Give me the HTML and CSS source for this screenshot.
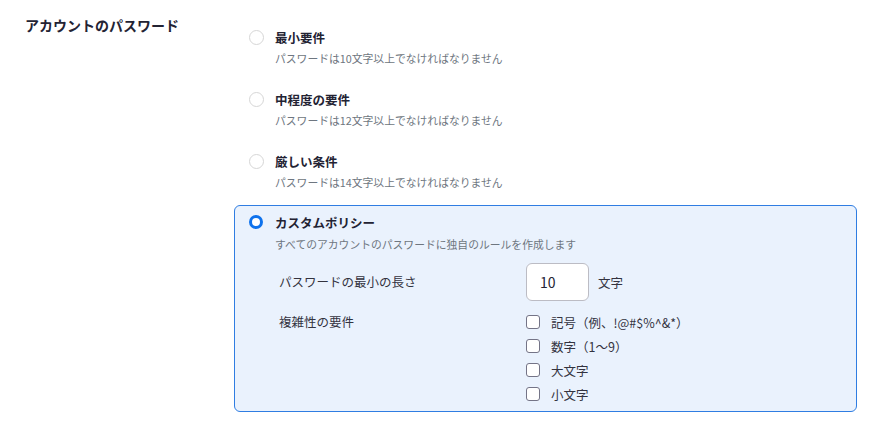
FILE: index.html
```html
<!DOCTYPE html>
<html lang="ja">
<head>
<meta charset="utf-8">
<link rel="stylesheet" href="styles.css">
</head>
<body>
<div class="setting">
  <div class="setting-title">アカウントのパスワード</div>
  <div class="options">
    <div class="option">
      <div class="option-head"><span class="radio"></span><span class="option-label">最小要件</span></div>
      <div class="option-desc">パスワードは10文字以上でなければなりません</div>
    </div>
    <div class="option">
      <div class="option-head"><span class="radio"></span><span class="option-label">中程度の要件</span></div>
      <div class="option-desc">パスワードは12文字以上でなければなりません</div>
    </div>
    <div class="option option-last">
      <div class="option-head"><span class="radio"></span><span class="option-label">厳しい条件</span></div>
      <div class="option-desc">パスワードは14文字以上でなければなりません</div>
    </div>
    <div class="custom">
      <div class="option-head"><span class="radio radio-checked"></span><span class="option-label">カスタムポリシー</span></div>
      <div class="option-desc">すべてのアカウントのパスワードに独自のルールを作成します</div>
      <div class="rules">
        <div class="rule-row rule-length">
          <div class="rule-label">パスワードの最小の長さ</div>
          <div class="rule-control">
            <div class="num-input">10</div>
            <span class="unit">文字</span>
          </div>
        </div>
        <div class="rule-row rule-complex">
          <div class="rule-label">複雑性の要件</div>
          <div class="checks">
            <div class="check-row"><span class="checkbox"></span><span>記号（例、!@#$%^&amp;*）</span></div>
            <div class="check-row"><span class="checkbox"></span><span>数字（1～9）</span></div>
            <div class="check-row"><span class="checkbox"></span><span>大文字</span></div>
            <div class="check-row"><span class="checkbox"></span><span>小文字</span></div>
          </div>
        </div>
      </div>
    </div>
  </div>
</div>
</body>
</html>
```

FILE: styles.css
```css
* { box-sizing: border-box; }
html, body { margin: 0; padding: 0; background: #ffffff; }
body {
  font-family: "Noto Sans CJK JP", "Noto Sans", "Liberation Sans", sans-serif;
  color: #232333;
}
.setting {
  display: flex;
  padding: 15px 0 0 25px;
}
.setting-title {
  width: 209px;
  flex: none;
  font-size: 14px;
  font-weight: 700;
  line-height: 20px;
  color: #232333;
}
.options {
  width: 623px;
  flex: none;
  padding-top: 12px;
}
.option {
  padding-left: 15px;
  margin-bottom: 23px;
}
.option-last { margin-bottom: 15px; }
.option-head {
  display: flex;
  align-items: center;
  height: 20px;
}
.radio {
  width: 15px;
  height: 15px;
  border-radius: 50%;
  border: 1px solid #d6d6d6;
  background: #fff;
  flex: none;
  margin-right: 11px;
}
.radio-checked {
  width: 14px;
  height: 14px;
  border: 3.5px solid #0e72ed;
  margin-right: 12px;
}
.option-label {
  font-size: 12.5px;
  font-weight: 700;
  color: #232333;
}
.option-desc {
  margin: 3px 0 0 26px;
  font-size: 10.8px;
  line-height: 16px;
  color: #6e7680;
}
.custom {
  border: 1px solid #2f7de2;
  border-radius: 6px;
  background: #eaf2fd;
  padding: 6px 14px 5px 14px;
}
.custom .option-desc { margin-top: 4px; }
.rules {
  margin: 11px 0 0 30px;
}
.rule-row {
  display: flex;
}
.rule-label {
  width: 247px;
  flex: none;
  font-size: 12.5px;
  color: #33333f;
}
.rule-length .rule-label { line-height: 38px; }
.rule-control {
  display: flex;
  align-items: center;
  gap: 9px;
}
.num-input {
  width: 63px;
  height: 38px;
  border: 1px solid #bcbcc4;
  border-radius: 6px;
  background: #fff;
  padding-left: 13px;
  font-size: 14px;
  line-height: 36px;
  color: #232333;
}
.unit {
  font-size: 12.5px;
  color: #33333f;
}
.rule-complex {
  margin-top: 9px;
}
.rule-complex .rule-label { line-height: 24px; }
.checks {
  display: flex;
  flex-direction: column;
}
.check-row {
  display: flex;
  align-items: center;
  height: 24px;
  font-size: 12.5px;
  color: #33333f;
}
.checkbox {
  width: 14px;
  height: 14px;
  border: 1.5px solid #747487;
  border-radius: 3px;
  background: #fff;
  flex: none;
  margin-right: 11px;
}
```
